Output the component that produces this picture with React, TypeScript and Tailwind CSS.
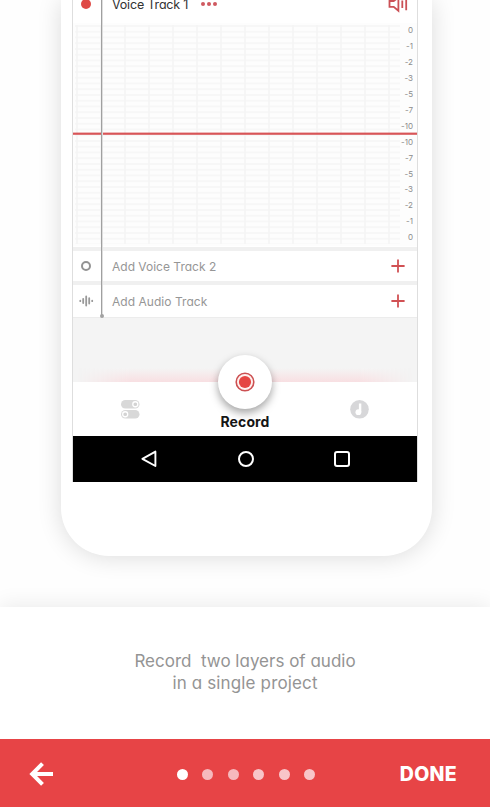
const levels = ['0', '-1', '-2', '-3', '-5', '-7', '-10', '-10', '-7', '-5', '-3', '-2', '-1', '0'];

function Plus() {
  return (
    <svg className="mr-3 h-[14px] w-[14px]" viewBox="0 0 14 14" stroke="#d15154" strokeWidth="1.8">
      <path d="M7 .4v13.2M.4 7h13.2" />
    </svg>
  );
}

function TrackHeader() {
  return (
    <div className="flex h-[22px] shrink-0 items-start">
      <div className="flex w-[26px] justify-center">
        <span className="-mt-[1px] h-[10px] w-[10px] rounded-full bg-[#df4a46]" />
      </div>
      <span className="-mt-[5px] ml-[13px] w-[89px] whitespace-nowrap text-[12.5px] leading-5 tracking-[-0.18px] text-[#333]">
        Voice Track 1
      </span>
      <span className="mt-[2px] flex gap-[2px]">
        <i className="h-1 w-1 rounded-full bg-[#cf5960]" />
        <i className="h-1 w-1 rounded-full bg-[#cf5960]" />
        <i className="h-1 w-1 rounded-full bg-[#cf5960]" />
      </span>
      <svg
        className="-mt-[4px] ml-auto mr-[9px] h-[17px] w-[20px]"
        viewBox="0 0 20 17"
        fill="none"
        stroke="#cb5156"
        strokeWidth="1.8"
      >
        <path d="M1.5 5h4.2l4.7-3.5v13.3l-4.7-3.9H1.5z" />
        <path d="M14.3 4.5v7.5M18.2 1.5v12.8" />
      </svg>
    </div>
  );
}

function Waveform() {
  return (
    <div className="relative flex h-[225px] shrink-0">
      <svg className="h-full w-full" viewBox="0 0 344 225">
        <defs>
          <pattern id="rows" x="0" y="3" width="24" height="5.75" patternUnits="userSpaceOnUse">
            <path d="M0 1h24" stroke="#f7f7f7" strokeWidth="2" />
          </pattern>
          <pattern id="cols" x="3" y="0" width="24" height="20" patternUnits="userSpaceOnUse">
            <path d="M1 0v20" stroke="#f4f4f4" strokeWidth="1.5" />
          </pattern>
        </defs>
        <rect y="1" width="344" height="223" fill="#fdfdfd" />
        <rect x="2" y="3" width="325" height="219" fill="url(#rows)" />
        <rect x="2" y="3" width="325" height="219" fill="url(#cols)" />
        <rect y="110.6" width="344" height="2.2" fill="#d85558" />
      </svg>
      <div className="absolute right-[4px] top-[0.4px] flex flex-col text-right text-[8px] text-[#8c8c8c]">
        {levels.map((level, i) => (
          <span key={i} className="h-[15.92px] leading-[16px]">
            {level}
          </span>
        ))}
      </div>
    </div>
  );
}

function BottomNav() {
  return (
    <div className="relative flex h-[54px] shrink-0 items-center justify-between bg-white px-[48px]">
      <svg className="h-[19px] w-[19px]" viewBox="0 0 19 19">
        <rect x="0" y="0" width="18.5" height="8.5" rx="4.25" fill="#d8d8d8" />
        <circle cx="14.3" cy="4.25" r="2.5" fill="#d3d3d3" stroke="#fff" strokeWidth="1.3" />
        <rect x="0" y="10" width="18.5" height="8.5" rx="4.25" fill="#d8d8d8" />
        <circle cx="4.2" cy="14.25" r="2.5" fill="#d3d3d3" stroke="#fff" strokeWidth="1.3" />
      </svg>
      <svg className="h-[19px] w-[19px]" viewBox="0 0 19 19">
        <circle cx="9.5" cy="9.3" r="9.3" fill="#d7d7d9" />
        <circle cx="8.4" cy="12.2" r="2.9" fill="#fff" />
        <path d="M10.1 12.2V3.5" stroke="#fff" strokeWidth="2.4" />
      </svg>
      <div className="absolute left-[145px] top-[-27px] flex w-[54px] flex-col items-center">
        <span className="flex h-[54px] w-[54px] items-center justify-center rounded-full bg-white shadow-[0_4px_8px_rgba(0,0,0,0.36)]">
          <svg className="h-5 w-5" viewBox="0 0 20 20">
            <circle cx="10" cy="10" r="8.8" fill="#fff1ef" stroke="#cc5052" strokeWidth="1.6" />
            <circle cx="10" cy="10" r="6.1" fill="#e54542" />
          </svg>
        </span>
        <span className="mt-[3px] text-[14px] font-bold leading-5 tracking-[0.1px] text-[#151515]">
          Record
        </span>
      </div>
    </div>
  );
}

function Phone() {
  return (
    <div className="h-[556px] w-[371px] shrink-0 rounded-b-[48px] bg-white pl-[11px] shadow-[0_1px_24px_rgba(0,0,0,0.14)]">
      <div className="relative flex h-[482px] w-[346px] flex-col border-x border-[#dedede] bg-white">
        <TrackHeader />
        <Waveform />
        <div className="h-1 shrink-0 bg-[#f0f0f0]" />
        <div className="flex h-[30px] shrink-0 items-center">
          <div className="flex w-[39px] pl-[8px]">
            <span className="h-[10px] w-[10px] rounded-full border-2 border-[#939393]" />
          </div>
          <span className="flex-1 pt-[2px] text-[12px] text-[#969696]">Add Voice Track 2</span>
          <Plus />
        </div>
        <div className="h-1 shrink-0 bg-[#f0f0f0]" />
        <div className="flex h-8 shrink-0 items-center">
          <div className="flex w-[39px] pl-[6px]">
            <svg
              className="h-3 w-[15px]"
              viewBox="0 0 15 12"
              stroke="#999"
              strokeWidth="1.8"
              strokeLinecap="round"
            >
              <path d="M1.3 5.6v.6M4.2 3.8v4.2M7.2 1.5v9M10.2 3.2v5.4M13.2 5.6v.6" />
            </svg>
          </div>
          <span className="flex-1 pt-px text-[12px] tracking-[0.04px] text-[#969696]">
            Add Audio Track
          </span>
          <Plus />
        </div>
        <div className="flex h-[65px] shrink-0 items-end border-t border-[#ececec] bg-[#f4f4f4] px-1">
          <div className="h-[14px] flex-1 bg-linear-to-t from-[#f8dfe2] to-[#f4f4f4] [mask-image:linear-gradient(90deg,transparent,black_16%,black_84%,transparent)]" />
        </div>
        <BottomNav />
        <div className="flex h-[45.5px] shrink-0 items-center justify-between bg-black pl-[67px] pr-[67px]">
          <svg className="h-[18px] w-[17px]" viewBox="0 0 17 18" fill="none" stroke="#fff" strokeWidth="1.9">
            <path d="M15.4 1.6v14.4L2.4 8.8z" strokeLinejoin="round" />
          </svg>
          <span className="h-[16px] w-[16px] rounded-full border-2 border-white" />
          <span className="h-[16px] w-[16px] rounded-[3px] border-2 border-white" />
        </div>
        <div className="absolute left-[28px] top-0 h-[316px] w-px bg-[#a0a0a0]" />
        <div className="absolute left-[29px] top-0 h-[316px] w-px bg-[#dedede]" />
        <div className="absolute left-[26.5px] top-[314px] h-1 w-1 rounded-full bg-[#a2a2a2]" />
      </div>
    </div>
  );
}

export default function App() {
  return (
    <main className="flex h-[807px] w-[490px] flex-col overflow-hidden bg-[#fefefe] font-['Inter',sans-serif] [font-feature-settings:'cv11']">
      <section className="flex h-[607px] shrink-0 pl-[61px]">
        <Phone />
      </section>
      <section className="relative flex h-[132px] shrink-0 flex-col items-center bg-white pt-[43px] text-[17px] leading-[22px] text-[#949494] shadow-[0_-2px_20px_rgba(0,0,0,0.08)]">
        <p className="whitespace-pre">Record  two layers of audio</p>
        <p className="tracking-[0.14px]">in a single project</p>
      </section>
      <footer className="relative flex h-[68px] shrink-0 items-center bg-[#e74446] pt-[2px] text-white">
        <svg
          className="ml-[29px] h-6 w-[25px]"
          viewBox="0 0 25 24"
          fill="none"
          stroke="#fff"
          strokeWidth="4"
        >
          <path d="M24 12H3M13.5 1.7L3.2 12l10.3 10.3" />
        </svg>
        <div className="ml-[122.5px] flex gap-[14.5px]">
          <span className="h-[11px] w-[11px] rounded-full bg-white" />
          <span className="h-[11px] w-[11px] rounded-full bg-[#f6b9bd]" />
          <span className="h-[11px] w-[11px] rounded-full bg-[#f6b9bd]" />
          <span className="h-[11px] w-[11px] rounded-full bg-[#f8c5c9]" />
          <span className="h-[11px] w-[11px] rounded-full bg-[#f8c5c9]" />
          <span className="h-[11px] w-[11px] rounded-full bg-[#f8c5c9]" />
        </div>
        <span className="ml-auto mr-[33px] pt-[2px] text-[19.5px] font-extrabold tracking-[0.3px]">DONE</span>
      </footer>
    </main>
  );
}
